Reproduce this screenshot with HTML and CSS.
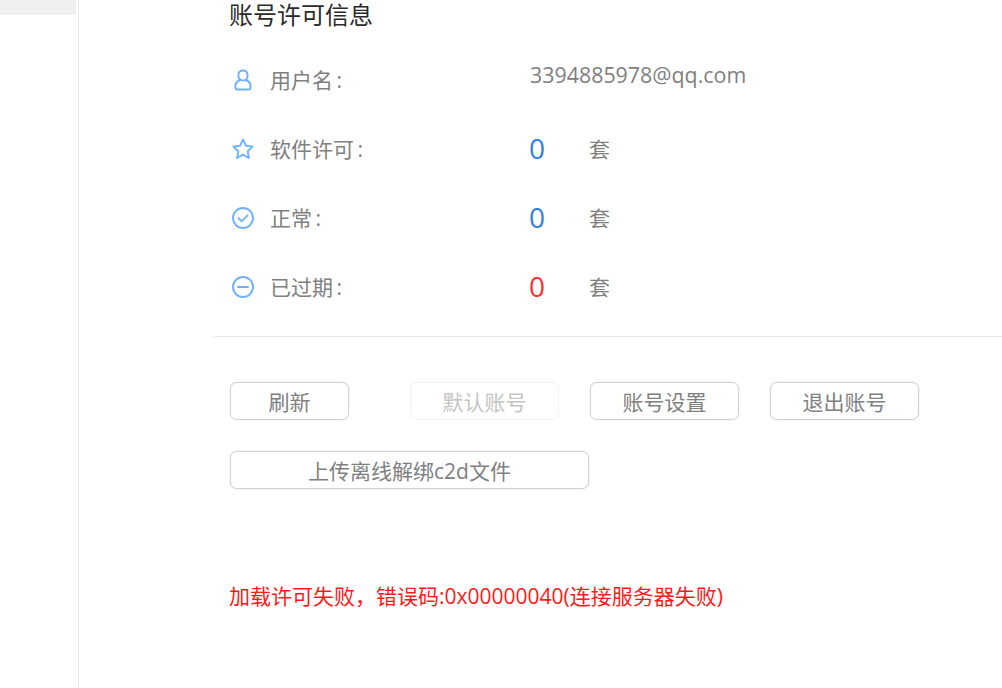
FILE: index.html
```html
<!DOCTYPE html>
<html lang="zh-CN">
<head>
<meta charset="UTF-8" />
<title>账号许可信息</title>
<link rel="stylesheet" href="styles.css">
</head>
<body>
  <div class="sidebar">
    <div class="side-item"></div>
  </div>

  <div class="main">
    <div class="info">
      <h1>账号许可信息</h1>

      <div class="row">
        <svg class="icon" viewBox="0 0 24 24"><path d="M12 2.500c-3 0-4.600 2.300-4.600 5s1.600 5 4.600 5 4.600-2.300 4.600-5-1.600-5-4.600-5z"/><path d="M8.500 12.500c-2.500 1-4 2.500-4 5v2c0 1.200.8 2 2 2h11c1.200 0 2-.8 2-2v-2c0-2.500-1.500-4-4-5"/></svg>
        <span class="label">用户名&thinsp;:</span>
        <span class="email">3394885978@qq.com</span>
      </div>

      <div class="row">
        <svg class="icon" viewBox="0 0 24 24"><path d="M12 2.500l2.900 6.200 6.700.9-4.900 4.700 1.200 6.700-5.900-3.300-5.900 3.300 1.200-6.700-4.900-4.700 6.700-.9z"/></svg>
        <span class="label">软件许可&thinsp;:</span>
        <span class="count">0</span>
        <span class="unit">套</span>
      </div>

      <div class="row">
        <svg class="icon" viewBox="0 0 24 24"><circle cx="12" cy="12" r="10"/><path d="M7.500 12.300l3.200 3 5.800-6"/></svg>
        <span class="label">正常&thinsp;:</span>
        <span class="count">0</span>
        <span class="unit">套</span>
      </div>

      <div class="row">
        <svg class="icon" viewBox="0 0 24 24"><circle cx="12" cy="12" r="10"/><path d="M7 12h10"/></svg>
        <span class="label">已过期&thinsp;:</span>
        <span class="count expired">0</span>
        <span class="unit">套</span>
      </div>
    </div>

    <div class="actions">
      <div class="btn-row">
        <button class="btn first">刷新</button>
        <button class="btn wide" disabled>默认账号</button>
        <button class="btn wide">账号设置</button>
        <button class="btn wide">退出账号</button>
      </div>
      <div class="btn-row">
        <button class="btn full">上传离线解绑c2d文件</button>
      </div>
      <p class="error">加载许可失败，错误码:0x00000040(连接服务器失败)</p>
    </div>
  </div>
</body>
</html>
```

FILE: styles.css
```css
html, body {
  height: 100%;
}
body {
  margin: 0;
  display: flex;
  overflow: hidden;
  background: #fff;
  font-family: "Open Sans", "Noto Sans CJK SC", sans-serif;
  color: #808080;
}

/* left menu, only the bottom of it is visible */
.sidebar {
  width: 78px;
  flex-shrink: 0;
  border-right: 1px solid #e8e8e8;
}
.side-item {
  width: 76px;
  height: 15px;
  background: #f0f0f0;
}

.main {
  flex: 1;
  padding-left: 135px;
}

.info {
  padding-left: 15px;
  height: 336px;
  border-bottom: 1px solid #e8e8e8;
}
h1 {
  margin: 0 0 15px;
  font-size: 24px;
  line-height: 30px;
  font-weight: 400;
  color: #2b2b2b;
}

.row {
  display: flex;
  align-items: center;
  height: 69px;
  font-size: 21px;
}
.icon {
  width: 24px;
  height: 24px;
  margin-right: 15px;
  margin-left: 2px;
  fill: none;
  stroke: #6fb1ff;
  stroke-width: 1.9;
  stroke-linejoin: round;
  stroke-linecap: round;
  flex-shrink: 0;
}
.label {
  width: 260px;
  flex-shrink: 0;
  margin-bottom: 2px;
}
.email {
  margin-bottom: 10px;
  font-size: 21.4px;
}
.count {
  width: 59px;
  margin-bottom: 2px;
  margin-left: -1px;
  margin-right: 1px;
  font-size: 28px;
  color: #2f80e0;
}
.count.expired {
  color: #ff3030;
}
.unit {
  margin-bottom: 2px;
}

.actions {
  padding: 45px 0 0 16px;
}
.btn-row {
  display: flex;
  gap: 30px;
  margin-bottom: 31px;
}
.btn {
  width: 119px;
  height: 38px;
  padding: 0;
  background: #fff;
  border: 1px solid #d2d2d2;
  border-radius: 7px;
  box-shadow: 0 0 2px #e0e0e0;
  font-family: inherit;
  font-size: 21px;
  color: #808080;
}
.btn.first {
  margin-right: 31px;
}
.btn.wide {
  width: 149px;
  margin-right: 1px;
}
.btn.full {
  width: 359px;
}
.btn:disabled {
  border-color: #f2f2f2;
  box-shadow: none;
  color: #c4c4c4;
}

.error {
  margin: 92px 0 0 -1px;
  font-size: 21px;
  line-height: 30px;
  color: #ff1a1a;
}
```
